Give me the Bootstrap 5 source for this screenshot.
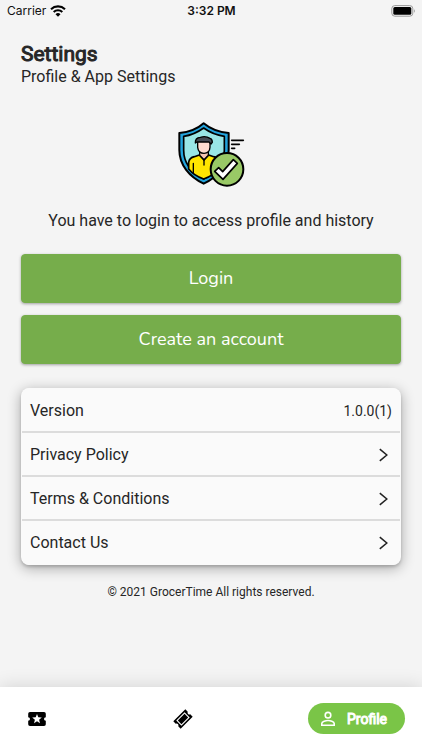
<!DOCTYPE html>
<html lang="en">
<head>
<meta charset="utf-8">
<meta name="viewport" content="width=device-width, initial-scale=1">
<title>Settings</title>
<link href="https://cdn.jsdelivr.net/npm/bootstrap@5.3.0/dist/css/bootstrap.min.css" rel="stylesheet">
<style>
  body { background: #f4f4f4; color: #262626; font-family: Roboto, sans-serif; font-size: 16px; line-height: 22px; }
  .status-bar { height: 22px; padding: 0 6px 0 7px; color: #111; font-family: Inter, sans-serif; font-size: 12px; }
  .page-main { padding: 20px 21px 0; }
  .page-title { font-size: 21px; line-height: 24px; font-weight: 400; -webkit-text-stroke: 1px currentColor; }
  .page-sub { line-height: 22px; }
  .hero-art { width: 68px; height: 66px; margin-top: 34px; }
  .login-note { margin-top: 22px; }
  .action-stack { margin-top: 22px; }
  .btn-leaf { --bs-btn-color: #fff; --bs-btn-bg: #76ad4b; --bs-btn-border-color: #76ad4b; --bs-btn-hover-color: #fff; --bs-btn-hover-bg: #6a9f41; --bs-btn-border-radius: 4px;
    height: 49px; font-family: Nunito, Lato, sans-serif; font-size: 18px; box-shadow: 0 1px 3px rgba(0,0,0,.35); }
  .settings-list { --bs-list-group-bg: #fafafa; --bs-list-group-color: #262626; --bs-list-group-border-radius: 8px; background: #fafafa; border-radius: 8px; padding: 0 1px; margin-top: 24px; box-shadow: 0 3px 14px rgba(0,0,0,.32), 0 2px 3px rgba(0,0,0,.16); }
  .settings-list .list-group-item { height: 44px; padding: 2px 8px 0; border-width: 0 0 2px; border-color: #dcdcdc; color: #262626; }
  .settings-list .list-group-item:first-child { height: 45px; }
  .settings-list .list-group-item:last-child { border-bottom: 0; padding-top: 0; }
  .version-no { font-size: 14px; }
  .copyright { font-size: 12px; margin-top: 16px; }
  .tab-bar { height: 63px; padding: 0 17px 0 28px; background: #fff; box-shadow: 0 0 18px rgba(0,0,0,.14); }
  .tab-bar a { color: #000; }
  .tab-bar .tab-active { height: 31px; padding: 0 18px 0 12px; background: #7ac547; color: #fff; font-size: 14px; -webkit-text-stroke: 1px currentColor; gap: 11px; }
  .tab-bar .tab-middle { margin-left: 12px; }
</style>
</head>
<body class="min-vh-100 d-flex flex-column">
<header class="status-bar row g-0 align-items-center">
  <div class="col d-flex align-items-center gap-1">Carrier
    <svg width="16" height="12" viewBox="0 0 16 12" fill="none" stroke="#000" stroke-width="2.1" aria-hidden="true"><path d="M1 4.2a10.2 10.2 0 0 1 14 0M3.7 7a6.3 6.3 0 0 1 8.6 0"/><path d="M8 11.7 5.5 9.2a3.7 3.7 0 0 1 5 0z" fill="#000" stroke="none"/></svg>
  </div>
  <div class="col text-center fw-semibold">3:32 PM</div>
  <div class="col text-end d-flex justify-content-end">
    <svg width="25" height="12" viewBox="0 0 25 12" aria-label="Battery full"><rect x=".8" y=".6" width="21" height="10.6" rx="3" fill="none" stroke="#999"/><rect x="2.3" y="2.1" width="18" height="7.6" rx="1.5"/><path d="M23 4q1.6 2 0 4z" fill="#888"/></svg>
  </div>
</header>

<main class="page-main flex-grow-1">
  <h1 class="page-title mb-0">Settings</h1>
  <p class="page-sub mb-0">Profile &amp; App Settings</p>
  <div class="text-center">
    <svg class="hero-art" viewBox="36 36 204 198" stroke-linejoin="round" stroke-linecap="round" aria-hidden="true">
      <path d="M116 40C98 56 68 67 43 69v51c0 45 30 80 73 101 43-21 75-56 75-101V69c-25-2-56-13-75-29z" fill="#22a3dc" stroke="#000" stroke-width="6"/>
      <path d="M116 54C98 67 77 76 56 79v42c0 37 22 66 60 86 38-20 62-49 62-86V79c-21-3-44-12-62-25z" fill="#99e6e6" stroke="#000" stroke-width="5"/>
      <path d="M71 177v-20q2-14 17-17l15-5 14 15 14-15 15 5q15 3 15 17v20q-16 20-45 30-29-10-45-30z" fill="#ffe500" stroke="#000" stroke-width="5"/>
      <path d="M85 160v29M117 150v15" fill="none" stroke="#000" stroke-width="4"/>
      <path d="M104 126v10l13 13 13-13v-10z" fill="#f7c5b2" stroke="#000" stroke-width="4"/>
      <path d="M98 94v18q2 18 19 18t18-18V94z" fill="#ffdcd0" stroke="#000" stroke-width="4"/>
      <path d="M91 99q-1-16 15-17 16-5 29 3 7 2 7 12l-4 5-6-6H96z" fill="#454b54" stroke="#000" stroke-width="4"/>
      <circle cx="186" cy="178" r="49" fill="#99c966" stroke="#000" stroke-width="6"/>
      <path d="m149 184 12-11 12 12 32-36 12 11-43 48z" fill="#fff" stroke="#000" stroke-width="5"/>
      <path d="M200 91h35M200 103h23M200 115h9" fill="none" stroke="#000" stroke-width="5"/>
    </svg>
    <p class="mb-0 login-note">You have to login to access profile and history</p>
  </div>
  <div class="d-grid gap-2 action-stack">
    <button type="button" class="btn btn-leaf">Login</button>
    <button type="button" class="btn btn-leaf mt-1">Create an account</button>
  </div>

  <div class="list-group settings-list">
    <div class="list-group-item d-flex justify-content-between align-items-center"><span>Version</span><span class="version-no">1.0.0(1)</span></div>
    <a href="#" class="list-group-item d-flex justify-content-between align-items-center">Privacy Policy<svg class="me-1" width="9" height="14" viewBox="0 0 9 14" fill="none" stroke="#222" stroke-width="1.5" aria-hidden="true"><path d="m.8 1.2 7 5.8-7 5.8"/></svg></a>
    <a href="#" class="list-group-item d-flex justify-content-between align-items-center">Terms &amp; Conditions<svg class="me-1" width="9" height="14" viewBox="0 0 9 14" fill="none" stroke="#222" stroke-width="1.5" aria-hidden="true"><path d="m.8 1.2 7 5.8-7 5.8"/></svg></a>
    <a href="#" class="list-group-item d-flex justify-content-between align-items-center">Contact Us<svg class="me-1" width="9" height="14" viewBox="0 0 9 14" fill="none" stroke="#222" stroke-width="1.5" aria-hidden="true"><path d="m.8 1.2 7 5.8-7 5.8"/></svg></a>
  </div>
  <p class="copyright text-center mb-0">© 2021 GrocerTime All rights reserved.</p>
</main>

<nav class="tab-bar d-flex justify-content-between align-items-center" aria-label="Main">
  <a href="#" class="d-flex" aria-label="Offers"><svg width="18" height="14" viewBox="0 0 18 14"><path fill-rule="evenodd" d="M2 0h14q1.8 0 1.8 1.8v3.4a1.8 1.8 0 0 0 0 3.6v3.4q0 1.8-1.8 1.8H2Q.2 14 .2 12.200V8.800a1.800 1.800 0 0 0 0-3.600V1.800Q.2 0 2 0zM9 2 7.700 5.300 4.200 5.500 6.900 7.700 6 11.200 9 9.300l3 1.900-.9-3.500 2.700-2.200-3.500-.2z"/></svg></a>
  <a href="#" class="d-flex tab-middle" aria-label="Tickets"><svg width="20" height="20" viewBox="0 0 20 20"><g transform="translate(10 10) rotate(-45)"><path d="M-8.500-5.200h17v3.400a1.900 1.900 0 0 0 0 3.600v3.400h-17V1.800a1.900 1.900 0 0 0 0-3.600z"/><path d="M-5.300-3.100H5.300v6.200H-5.300z" fill="none" stroke="#fff" stroke-width="1.100"/></g></svg></a>
  <a href="#" class="tab-active d-flex align-items-center rounded-pill text-decoration-none" aria-current="page"><svg width="16" height="16" viewBox="0 0 16 16" fill="none" stroke="#fff" stroke-width="1.600" aria-hidden="true"><circle cx="8" cy="4.200" r="2.800"/><path d="M1.800 14.200v-1.700c0-2 4.200-3 6.200-3s6.200 1 6.200 3v1.700z"/></svg>Profile</a>
</nav>
<script src="https://cdn.jsdelivr.net/npm/bootstrap@5.3.0/dist/js/bootstrap.bundle.min.js"></script>
</body>
</html>
